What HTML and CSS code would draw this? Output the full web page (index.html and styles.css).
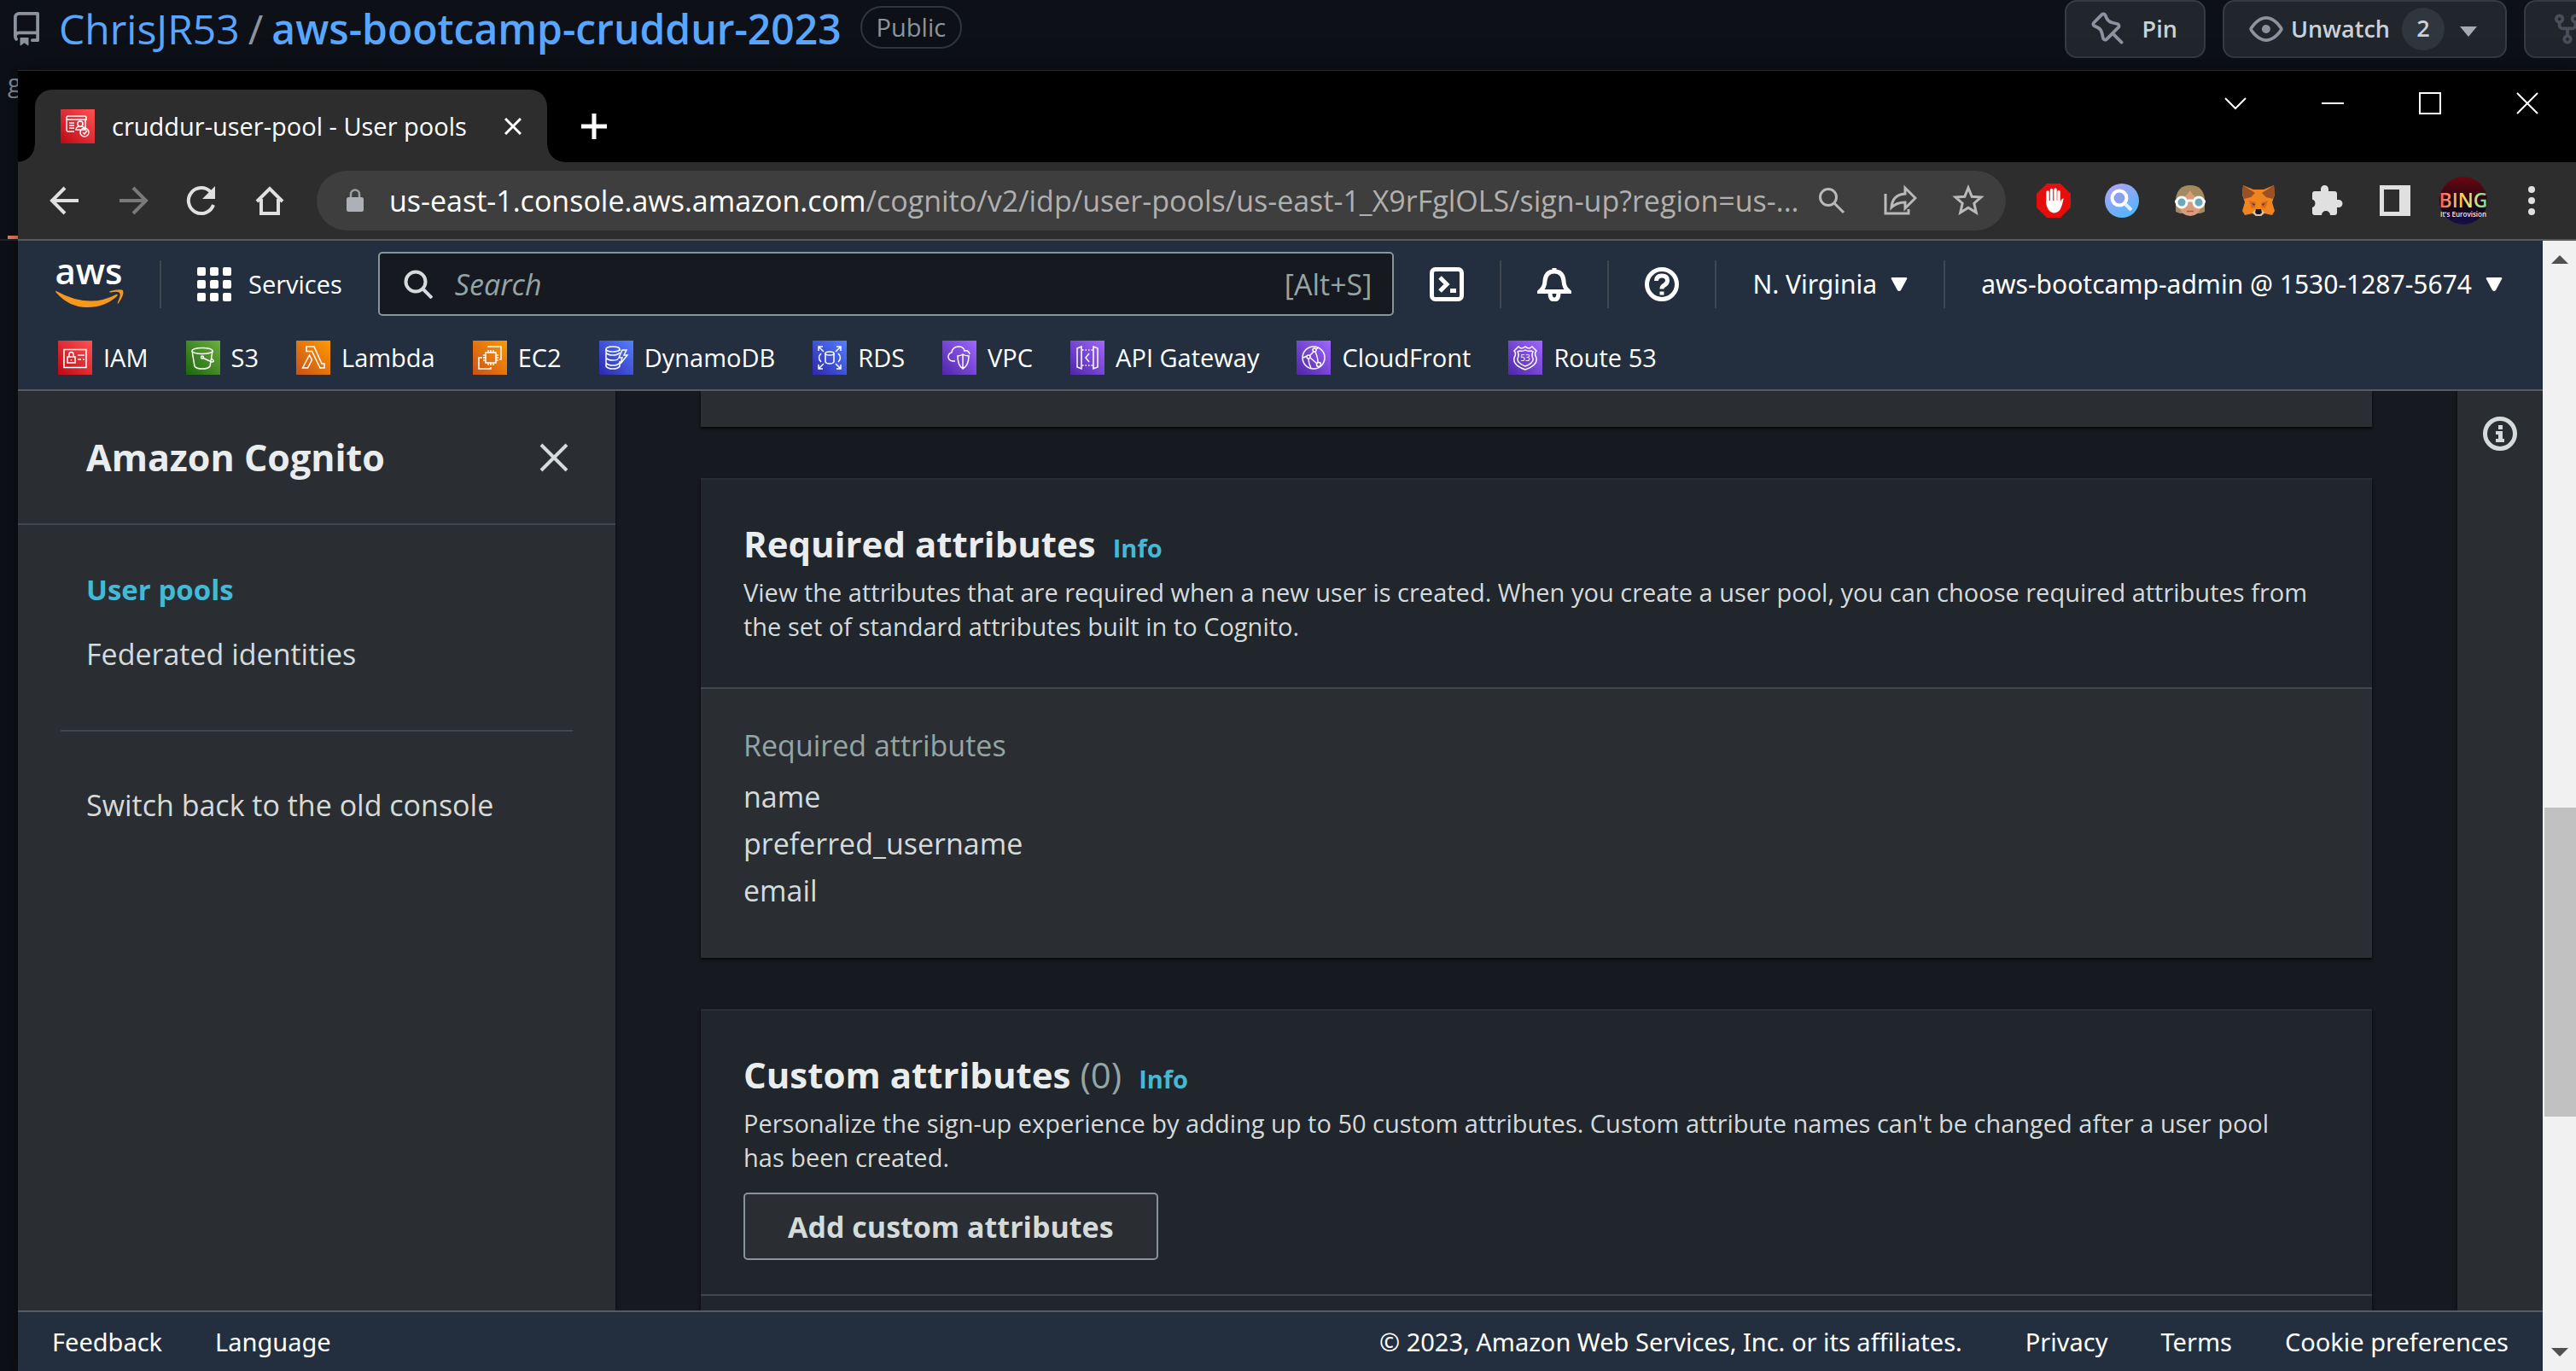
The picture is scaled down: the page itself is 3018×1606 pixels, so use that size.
FILE: index.html
```html
<!DOCTYPE html>
<html lang="en">
<head>
<meta charset="utf-8">
<meta name="viewport" content="width=device-width, initial-scale=1">
<title>cruddur-user-pool - User pools</title>
<link rel="stylesheet" href="styles.css">
</head>
<body>
<div class="desktop">

<section class="repo">
  <header class="repo-header">
    <svg class="icon-40 muted" viewBox="0 0 16 16" aria-hidden="true"><path d="M2 2.5A2.5 2.5 0 0 1 4.5 0h8.75a.75.75 0 0 1 .75.75v12.5a.75.75 0 0 1-.75.75h-2.5a.75.75 0 0 1 0-1.5h1.75v-2h-8a1 1 0 0 0-.714 1.7.75.75 0 1 1-1.072 1.05A2.495 2.495 0 0 1 2 11.5Zm10.5-1h-8a1 1 0 0 0-1 1v6.708A2.486 2.486 0 0 1 4.5 9h8ZM5 12.25a.25.25 0 0 1 .25-.25h3.5a.25.25 0 0 1 .25.25v3.25a.25.25 0 0 1-.4.2l-1.45-1.087a.249.249 0 0 0-.3 0L5.4 15.7a.25.25 0 0 1-.4-.2Z"/></svg>
    <h1 class="repo-name"><a href="#owner">ChrisJR53</a><span class="slash">/</span><a class="strong" href="#repo">aws-bootcamp-cruddur-2023</a></h1>
    <span class="pill">Public</span>
    <div class="repo-actions">
      <button class="gh-btn gh-pin" type="button"><svg class="icon-40" viewBox="0 0 16 16" aria-hidden="true"><path d="M4.456.734a1.75 1.75 0 0 1 2.826.504l.613 1.327a3.081 3.081 0 0 0 2.084 1.707l2.454.584c1.332.317 1.8 1.972.832 2.94L11.06 10l3.72 3.72a.749.749 0 1 1-1.06 1.06L10 11.06l-2.204 2.205c-.968.968-2.623.5-2.94-.832l-.584-2.454a3.081 3.081 0 0 0-1.707-2.084l-1.327-.613a1.75 1.75 0 0 1-.504-2.826L4.456.734ZM5.92 1.866a.25.25 0 0 0-.404-.072L1.794 5.516a.25.25 0 0 0 .072.404l1.328.613A4.582 4.582 0 0 1 5.73 9.63l.584 2.454a.25.25 0 0 0 .42.12l5.47-5.47a.25.25 0 0 0-.12-.42L9.63 5.73a4.581 4.581 0 0 1-3.098-2.537L5.92 1.866Z"/></svg>Pin</button>
      <button class="gh-btn gh-watch" type="button"><svg class="icon-40" viewBox="0 0 16 16" aria-hidden="true"><path d="M8 2c1.981 0 3.671.992 4.933 2.078 1.27 1.091 2.187 2.345 2.637 3.023a1.62 1.62 0 0 1 0 1.798c-.45.678-1.367 1.932-2.637 3.023C11.67 13.008 9.981 14 8 14c-1.981 0-3.671-.992-4.933-2.078C1.797 10.83.88 9.576.43 8.898a1.62 1.62 0 0 1 0-1.798c.45-.677 1.367-1.931 2.637-3.022C4.33 2.992 6.019 2 8 2ZM1.679 7.932a.12.12 0 0 0 0 .136c.411.622 1.241 1.75 2.366 2.717C5.176 11.758 6.527 12.5 8 12.5c1.473 0 2.825-.742 3.955-1.715 1.124-.967 1.954-2.096 2.366-2.717a.12.12 0 0 0 0-.136c-.412-.621-1.242-1.75-2.366-2.717C10.824 4.242 9.473 3.5 8 3.5c-1.473 0-2.825.742-3.955 1.715-1.124.967-1.954 2.096-2.366 2.717ZM8 10a2 2 0 1 1-.001-3.999A2 2 0 0 1 8 10Z"/></svg>Unwatch<span class="counter">2</span><svg class="gh-caret" viewBox="0 0 20 12" aria-hidden="true"><path d="M0 0h20L10 12z"/></svg></button>
      <button class="gh-btn gh-fork" type="button" aria-label="Fork"><svg class="icon-40" viewBox="0 0 16 16" aria-hidden="true"><path d="M5 5.372v.878c0 .414.336.75.75.75h4.5a.75.75 0 0 0 .75-.75v-.878a2.25 2.25 0 1 1 1.5 0v.878a2.25 2.25 0 0 1-2.25 2.25h-1.5v2.128a2.251 2.251 0 1 1-1.5 0V8.5h-1.5A2.25 2.25 0 0 1 3.5 6.25v-.878a2.25 2.25 0 1 1 1.5 0ZM5 3.25a.75.75 0 1 0-1.5 0 .75.75 0 0 0 1.5 0Zm6.75.75a.75.75 0 1 0 0-1.5.75.75 0 0 0 0 1.5Zm-3 8.75a.75.75 0 1 0-1.5 0 .75.75 0 0 0 1.5 0Z"/></svg></button>
    </div>
  </header>
  <p class="repo-note">g</p>
  <div class="repo-tabs"><span class="repo-tab-active"></span></div>
</section>

<section class="window">
  <div class="tabstrip">
    <div class="tab">
      <svg class="fav red" viewBox="0 0 40 40" aria-hidden="true"><path d="M16 26H9q-2 0-2-2V10q0-2 2-2h19q2 0 2 2v3M7 12h12M10 16h6M10 19h6M10 22h6"/><circle cx="23" cy="17" r="3"/><path d="M18 24q0-4 5-4t6 4zM19 12h10v12"/><circle cx="28" cy="27" r="5"/><path d="m26 27 2 2 3-4"/></svg>
      <span class="tab-title">cruddur-user-pool - User pools</span>
      <button class="plain" type="button" aria-label="Close tab"><svg class="tab-x" viewBox="0 0 20 20"><path d="m1 1 18 18M19 1 1 19"/></svg></button>
    </div>
    <button class="plain" type="button" aria-label="New tab"><svg class="tab-plus" viewBox="0 0 30 30"><path d="M15 0v30M0 15h30"/></svg></button>
    <div class="win-controls">
      <button class="plain win-btn" type="button" aria-label="Search tabs"><svg viewBox="0 0 26 26"><path d="m1 7 12 12L25 7"/></svg></button>
      <button class="plain win-btn" type="button" aria-label="Minimize"><svg viewBox="0 0 26 26"><path d="M0 13h26"/></svg></button>
      <button class="plain win-btn" type="button" aria-label="Maximize"><svg viewBox="0 0 26 26"><path d="M1 1h24v24H1z"/></svg></button>
      <button class="plain win-btn" type="button" aria-label="Close"><svg viewBox="0 0 26 26"><path d="m1 1 24 24M25 1 1 25"/></svg></button>
    </div>
  </div>

  <div class="toolbar">
    <div class="tools nav-tools">
      <button class="plain" type="button" aria-label="Back"><svg class="tool" viewBox="0 0 40 40"><path d="M36 20H6M20 5 5 20l15 15"/></svg></button>
      <button class="plain" type="button" aria-label="Forward"><svg class="tool dim" viewBox="0 0 40 40"><path d="M4 20h30M20 5l15 15-15 15"/></svg></button>
      <button class="plain" type="button" aria-label="Reload"><svg class="tool" viewBox="0 0 40 40"><path d="M31 10A15 15 0 1 0 34 25"/><path class="solid" d="M36 3v15H21z"/></svg></button>
      <button class="plain" type="button" aria-label="Home"><svg class="tool" viewBox="0 0 40 40"><path d="M5 21 20 6l15 15M10 18v17h20V18"/></svg></button>
    </div>
    <div class="omnibox">
      <svg class="lock" viewBox="0 0 20 28" aria-hidden="true"><path d="M5 11V6.500a5 5 0 0 1 10 0V11" fill="none" stroke="#9aa0a6" stroke-width="2.500"/><rect y="10" width="20" height="17" rx="2.500" fill="#adb1b6"/></svg>
      <span class="url"><b>us-east-1.console.aws.amazon.com</b>/cognito/v2/idp/user-pools/us-east-1_X9rFglOLS/sign-up?region=us-...</span>
      <div class="tools">
        <button class="plain" type="button" aria-label="Zoom"><svg class="tool grey" viewBox="0 0 40 40"><circle cx="16" cy="16" r="9.500"/><path d="m23 23 11 11"/></svg></button>
        <button class="plain" type="button" aria-label="Share"><svg class="tool grey" viewBox="0 0 40 40"><path d="M3 12v23h27v-5"/><path d="M10 28q1-15 16-16V5l12 12-12 12v-7q-10 0-16 6z"/></svg></button>
        <button class="plain" type="button" aria-label="Bookmark"><svg class="tool grey" viewBox="0 0 40 40"><path d="m20 5 4.200 10.200L35 16l-8.200 7.200L29.300 34 20 28.200 10.700 34l2.500-10.800L5 16l10.800-.8z"/></svg></button>
      </div>
    </div>
    <div class="tools">
      <button class="plain" type="button" aria-label="Ad blocker"><svg class="ext" viewBox="0 0 40 40"><path fill="#e60d0d" d="M12 0h16l12 12v16L28 40H12L0 28V12z"/><g stroke="#fff" stroke-width="3.400" stroke-linecap="round"><path d="M13 10v14M17.500 7.500V24M22 7v17M26 9.500V24"/></g><path fill="#fff" d="M11.300 20h16.400v2q1-4.500 4-4.500-1.500 8-4 13-3 4-8 4-8.400-1.500-8.400-14.500z"/></svg></button>
      <button class="plain" type="button" aria-label="Search extension"><svg class="ext" viewBox="0 0 40 40"><defs><linearGradient id="orb" x1="0" y1="0" x2=".6" y2="1"><stop offset="0" stop-color="#b9a0f5"/><stop offset="1" stop-color="#54b4fb"/></linearGradient></defs><circle cx="20" cy="20" r="20" fill="url(#orb)"/><circle cx="17" cy="17" r="8.500" fill="#8ba0ee" stroke="#fff" stroke-width="4"/><path d="m24 24 7 7" stroke="#e3eefd" stroke-width="4"/></svg></button>
      <button class="plain" type="button" aria-label="Goggles extension"><svg class="ext" viewBox="0 0 40 40"><path fill="#a38a5f" d="M3 33V18Q5 2 20 2t17 16v15l-5 2H8z"/><path fill="#d99b78" d="M7 18q7-1 13-10 3 8 13 10v9q-3 11-13 11T7 27z"/><path d="M17 20h6M2 21h4M34 21h4" stroke="#f5f8f8" stroke-width="3"/><circle cx="10" cy="22" r="6" fill="#6ea6b4" stroke="#f7fafa" stroke-width="3"/><circle cx="30" cy="22" r="6" fill="#6ea6b4" stroke="#f7fafa" stroke-width="3"/><path d="M16 32.500h8" stroke="#a65b49" stroke-width="1.500"/></svg></button>
      <button class="plain" type="button" aria-label="Wallet extension"><svg class="ext" viewBox="0 0 40 40"><path fill="#f08420" d="m2 2 12 5h12l12-5 1 11-3 9 3 10-3 5-9-2-4 3h-6l-4-3-9 2-3-5 3-10-3-9z"/><path fill="#9a5126" d="m2 2 14 9-5 5-8 2-2-6zM38 2l-14 9 5 5 8 2 2-6z"/><path fill="#d96a1c" d="m9 20 8 2-1 6-4 1zM31 20l-8 2 1 6 4 1z"/><path fill="#2b3a4a" d="m12 23 4 1-1 2zM28 23l-4 1 1 2z"/><path fill="#d6c6b8" d="m13 34 3-3h8l3 3-4 4h-6z"/><path fill="#17181a" d="M17 30h6l1 4-2 2h-4l-2-2z"/></svg></button>
      <button class="plain" type="button" aria-label="Extensions"><svg class="ext" viewBox="0 0 40 40"><path fill="#e0e0e0" d="M6 9h7V6.500a4.500 4.500 0 0 1 9 0V9h7a3 3 0 0 1 3 3v7h2a4.500 4.500 0 0 1 0 9h-2v6a3 3 0 0 1-3 3h-5a5 5 0 0 0-10 0H6a3 3 0 0 1-3-3v-6a5 5 0 0 0 0-9.500V12a3 3 0 0 1 3-3z"/></svg></button>
      <button class="plain" type="button" aria-label="Side panel"><svg class="ext" viewBox="0 0 40 40"><path fill="#e0e0e0" fill-rule="evenodd" d="M2 2h36v36H2zM7 7v26h18V7z"/></svg></button>
    </div>
    <svg class="avatar" viewBox="0 0 56 56" role="img" aria-label="Profile"><defs><linearGradient id="night" x2="0" y2="1"><stop offset="0" stop-color="#6b0712"/><stop offset=".6" stop-color="#170510"/><stop offset="1" stop-color="#15104a"/></linearGradient><linearGradient id="neon"><stop offset="0" stop-color="#f2576a"/><stop offset=".4" stop-color="#f6c85a"/><stop offset=".7" stop-color="#d9e87a"/><stop offset="1" stop-color="#5fd6b8"/></linearGradient></defs><circle cx="28" cy="28" r="28" fill="url(#night)"/><text x="28" y="36" text-anchor="middle" font-size="23" font-weight="600" fill="url(#neon)">BING</text><text x="28" y="47" text-anchor="middle" font-size="8" font-weight="600" fill="#f1e6ee">It's Eurovision</text></svg>
    <button class="plain" type="button" aria-label="Menu"><svg class="ext" viewBox="0 0 40 40" fill="#e0e0e0"><circle cx="20" cy="7" r="4"/><circle cx="20" cy="20" r="4"/><circle cx="20" cy="33" r="4"/></svg></button>
  </div>

  <div class="viewport">
    <div class="console">
      <header class="aws-header">
        <div class="aws-row">
          <a href="#home" aria-label="AWS home"><svg class="aws-logo" viewBox="0 0 80 54"><text x="39" y="27" text-anchor="middle" font-size="42" font-weight="600" fill="#fff">aws</text><path fill="#f7981d" d="M1 35q38 21 70 4 3-1 1 2-14 13-35 13T1 37q-2-3 0-2zM64 35q11-3 15-1 2 5-5 15-2 2-1-1 4-9 2-11t-10-.5q-3 0-1-1.500z"/></svg></a>
          <span class="rule"></span>
          <button class="plain services" type="button"><svg class="icon-40" viewBox="0 0 40 40" fill="#fff"><rect width="10" height="10" rx="2"/><rect x="15" width="10" height="10" rx="2"/><rect x="30" width="10" height="10" rx="2"/><rect y="15" width="10" height="10" rx="2"/><rect x="15" y="15" width="10" height="10" rx="2"/><rect x="30" y="15" width="10" height="10" rx="2"/><rect y="30" width="10" height="10" rx="2"/><rect x="15" y="30" width="10" height="10" rx="2"/><rect x="30" y="30" width="10" height="10" rx="2"/></svg>Services</button>
          <label class="search"><svg class="search-icon" viewBox="0 0 34 34" aria-hidden="true"><circle cx="14" cy="14" r="11.500"/><path d="m22 22 11 11"/></svg><input type="search" placeholder="Search" aria-label="Search"><span class="hint">[Alt+S]</span></label>
          <button class="plain" type="button" aria-label="CloudShell"><svg class="line-icon" viewBox="0 0 40 40"><rect x="2.500" y="2.500" width="35" height="35" rx="4"/><path d="m12 12 8 8-8 8"/><path d="M24 27.500h7"/></svg></button>
          <span class="rule"></span>
          <button class="plain" type="button" aria-label="Notifications"><svg class="line-icon" viewBox="0 0 40 40"><path d="M20 1v4M3 28.500h34q-6-5-6-12.500Q30 5 20 5T9 16q0 7.500-6 12.500zM15 30q0 8 5 8t5-8"/></svg></button>
          <span class="rule"></span>
          <button class="plain" type="button" aria-label="Help"><svg class="line-icon" viewBox="0 0 40 40"><circle cx="20" cy="20" r="17.500"/><path d="M13.500 16q0-6 6.500-6t6.500 5.500q0 3.500-3.500 5.500-3 1.500-3 4.500M20 28.500v4"/></svg></button>
          <span class="rule"></span>
          <button class="plain account" type="button">N. Virginia<svg class="caret" viewBox="0 0 20 16"><path d="M2 0h16q2 0 1 2l-7 13q-2 2-4 0L1 2Q0 0 2 0z"/></svg></button>
          <span class="rule"></span>
          <button class="plain account" type="button">aws-bootcamp-admin @ 1530-1287-5674<svg class="caret" viewBox="0 0 20 16"><path d="M2 0h16q2 0 1 2l-7 13q-2 2-4 0L1 2Q0 0 2 0z"/></svg></button>
        </div>
        <nav class="favorites" aria-label="Favorites">
          <a href="#iam"><svg class="fav red" viewBox="0 0 40 40"><path d="M7 10.500h26v21H7zM11 19h9v7h-9zM13 19v-3q0-2.500 2.500-2.500T18 16v3M15.500 22v1.500M23 17h8M23 22h4M29 22h2"/></svg>IAM</a>
          <a href="#s3"><svg class="fav green" viewBox="0 0 40 40"><ellipse cx="19" cy="12" rx="12" ry="3.500"/><path d="m7 12 3 18q2 3 9 3t9-3l3-18M19 20l11 5q4 0 1-3l-1.500-1"/><circle cx="19" cy="19.500" r="1.500"/></svg>S3</a>
          <a href="#lambda"><svg class="fav orange" viewBox="0 0 40 40"><path d="M12 7h9l9 20h3v5h-5L18.500 12.500H12zM7.500 32h6l5-9.500-3-5.500z"/></svg>Lambda</a>
          <a href="#ec2"><svg class="fav orange" viewBox="0 0 40 40"><path d="M15 14h12v12H15zM18 11v3M21 11v3M24 11v3M18 26v3M21 26v3M24 26v3M12 17h3M12 20h3M12 23h3M27 17h3M27 20h3M27 23h3M18 8V7h15v15h-2M11 20H7v13h14v-2"/></svg>EC2</a>
          <a href="#dynamodb"><svg class="fav blue" viewBox="0 0 40 40"><ellipse cx="16" cy="10" rx="8" ry="3"/><path d="M8 10v4q2 3 8 3t8-3M24 10v2M8 15v5q2 3 8 3t6-2M8 21v5q2 3 8 3t8-3v-2M8 27v3q2 3 8 3t8-3v-5M27 11h5l-3 6h4l-8 10 2-7h-4z"/></svg>DynamoDB</a>
          <a href="#rds"><svg class="fav blue" viewBox="0 0 40 40"><path d="m7 7 6 6M7 12V7h5M33 7l-6 6M28 7h5v5M7 33l6-6M7 28v5h5M33 33l-6-6M28 33h5v-5M15 15v10q1 2 5 2t5-2V15M10 15q-5 5 0 10M30 15q5 5 0 10"/><ellipse cx="20" cy="15" rx="5" ry="2"/></svg>RDS</a>
          <a href="#vpc"><svg class="fav purple" viewBox="0 0 40 40"><path d="M15 24h-3q-5-1-5-5t4-5q1-7 8-7 6 0 7 5 5-1 6 4M24 16q-3 2-6 2 0 11 6 15 7-4 7-15-4 0-7-2zM24 16v17"/></svg>VPC</a>
          <a href="#apigateway"><svg class="fav purple" viewBox="0 0 40 40"><path d="m13 7-5 2v22l5 2zM27 7l5 2v22l-5 2zM22 15l-4 5 4 5"/><path stroke-dasharray="1.500 2" d="M14 11h12M14 29h12"/></svg>API Gateway</a>
          <a href="#cloudfront"><svg class="fav purple" viewBox="0 0 40 40"><circle cx="20" cy="20" r="13"/><circle cx="21" cy="11" r="2"/><circle cx="14" cy="19" r="2"/><circle cx="26" cy="28" r="2.500"/><path d="m20 13-5 5M16 20l8 7M22 13q3 7 3 12M12 18l-4 2M23 10l3-2M14 21q0 6 3 11"/></svg>CloudFront</a>
          <a href="#route53"><svg class="fav purple" viewBox="0 0 40 40"><path d="m12 7 3 2q3 0 5-2 2 2 5 2l3-2 5 5q-3 3 0 8 2 9-13 14Q5 29 7 20q3-5 0-8z"/><path d="M13 12q4 1 7-1 3 2 7 1l2 1q-2 4 0 8 1 5-9 9-10-4-9-9 2-4 0-8z"/><text x="20" y="24" text-anchor="middle" font-size="10" fill="#fff" stroke="none">53</text></svg>Route 53</a>
        </nav>
      </header>

      <div class="layout">
        <aside class="sidebar">
          <div class="sidebar-head">
            <h2>Amazon Cognito</h2>
            <button class="plain" type="button" aria-label="Close navigation"><svg class="side-x" viewBox="0 0 34 34"><path d="m2 2 30 30M32 2 2 32"/></svg></button>
          </div>
          <nav class="side-nav">
            <a class="active" href="#user-pools">User pools</a>
            <a href="#federated">Federated identities</a>
            <hr>
            <a href="#old-console">Switch back to the old console</a>
          </nav>
        </aside>

        <main class="content">
          <section class="card card-tail"></section>
          <section class="card">
            <header class="card-head">
              <h2>Required attributes</h2><a class="info" href="#info-required">Info</a>
              <p>View the attributes that are required when a new user is created. When you create a user pool, you can choose required attributes from the set of standard attributes built in to Cognito.</p>
            </header>
            <dl class="card-body">
              <dt>Required attributes</dt>
              <dd>name</dd>
              <dd>preferred_username</dd>
              <dd>email</dd>
            </dl>
          </section>
          <section class="card">
            <header class="card-head with-action">
              <h2>Custom attributes <span class="count">(0)</span></h2><a class="info" href="#info-custom">Info</a>
              <p>Personalize the sign-up experience by adding up to 50 custom attributes. Custom attribute names can't be changed after a user pool has been created.</p>
              <button class="aws-btn" type="button">Add custom attributes</button>
            </header>
            <div class="card-foot"></div>
          </section>
        </main>

        <aside class="rail">
          <button class="plain" type="button" aria-label="Open help panel"><svg class="rail-icon" viewBox="0 0 40 40"><circle cx="20" cy="20" r="17.500" fill="none" stroke="#d5dbdb" stroke-width="5"/><path fill="#d5dbdb" d="M18 10h5v5h-5zM15 17h8v9h2v4H15v-4h3v-5h-3z"/></svg></button>
        </aside>
      </div>

      <footer class="aws-footer">
        <a href="#feedback">Feedback</a>
        <a href="#language">Language</a>
        <span class="copyright">© 2023, Amazon Web Services, Inc. or its affiliates.</span>
        <a href="#privacy">Privacy</a>
        <a href="#terms">Terms</a>
        <a href="#cookies">Cookie preferences</a>
      </footer>
    </div>

    <div class="scrollbar" aria-hidden="true">
      <svg viewBox="0 0 20 10"><path d="M0 10h20L10 0z"/></svg>
      <div class="track"><div class="thumb"></div></div>
      <svg viewBox="0 0 20 10"><path d="M0 0h20L10 10z"/></svg>
    </div>
  </div>
</section>

</div>
</body>
</html>
```
FILE: styles.css
```css
* { box-sizing: border-box; }

body {
  margin: 0;
  background: #0d1117;
  color: #d5dbdb;
  font-family: "Open Sans", "Noto Sans", sans-serif;
  font-size: 29px;
  line-height: 40px;
}

h1, h2, p, dl, dd { margin: 0; }
a { color: inherit; text-decoration: none; }
svg { display: block; flex: none; }
button, input { font: inherit; color: inherit; }
svg text { font-family: "Open Sans", "Noto Sans", sans-serif; }

.plain {
  display: flex;
  align-items: center;
  padding: 0;
  border: 0;
  background: none;
  white-space: nowrap;
}

.icon-40 { width: 40px; height: 40px; }

.desktop {
  position: relative;
  height: 100vh;
  overflow: hidden;
}

/* Repository page behind the browser window */
.repo-header {
  display: flex;
  align-items: center;
  height: 68px;
  padding-left: 11px;
}
.muted { fill: #8b949e; }
.repo-name {
  display: flex;
  margin-left: 18px;
  color: #58a6ff;
  font-size: 48px;
  font-weight: 400;
  line-height: 60px;
  white-space: nowrap;
}
.slash { margin: 0 10px; color: #8b949e; }
.strong { font-weight: 600; }
.pill {
  margin: 0 0 5px 22px;
  padding: 3px 17px;
  border: 2px solid #30363d;
  border-radius: 25px;
  color: #8b949e;
}
.repo-actions { display: flex; gap: 20px; margin-left: auto; }
.gh-btn {
  display: flex;
  align-items: center;
  height: 68px;
  border: 2px solid #363b42;
  border-radius: 14px;
  background: #21262d;
  color: #c9d1d9;
  font-size: 27px;
  font-weight: 600;
}
.gh-btn svg { fill: #8b949e; }
.gh-pin { gap: 20px; padding: 0 31px 0 29px; }
.gh-watch { padding: 0 33px 0 29px; }
.gh-watch .icon-40 { margin-right: 9px; }
.counter {
  width: 50px;
  height: 50px;
  margin: 0 18px 0 14px;
  border-radius: 25px;
  background: #30363d;
  line-height: 48px;
}
.gh-btn .gh-caret { width: 20px; height: 12px; margin-top: 6px; fill: #a4abb3; }
.gh-fork {
  width: 61px;
  padding: 0 0 0 29px;
  border-right: 0;
  border-radius: 14px 0 0 14px;
  overflow: hidden;
}
.gh-btn.gh-fork svg { fill: #484f58; }
.repo-note { margin-top: 9px; padding-left: 9px; color: #8b949e; }
.repo-tabs {
  display: flex;
  height: 165px;
  padding-left: 9px;
  border-bottom: 2px solid #21262d;
}
.repo-tab-active { width: 160px; border-bottom: 4px solid #f78166; }

/* Browser window */
.window {
  position: absolute;
  top: 82px;
  right: 0;
  bottom: 0;
  left: 21px;
  display: flex;
  flex-direction: column;
  background: #000;
  box-shadow: 0 0 24px rgba(0, 0, 0, .5);
}
.tabstrip {
  display: flex;
  align-items: flex-end;
  gap: 40px;
  height: 108px;
  padding-left: 20px;
  border-top: 1px solid #2b2b2b;
}
.tabstrip > .plain { height: 85px; }
.tab {
  position: relative;
  display: flex;
  align-items: center;
  gap: 20px;
  width: 600px;
  height: 85px;
  padding: 0 30px;
  border-radius: 20px 20px 0 0;
  background: #2d2d2d;
  color: #fff;
}
.tab::before, .tab::after {
  content: "";
  position: absolute;
  bottom: 0;
  width: 20px;
  height: 20px;
}
.tab::before { right: 100%; background: radial-gradient(circle at 0 0, #000 19px, #2d2d2d 20px); }
.tab::after { left: 100%; background: radial-gradient(circle at 100% 0, #000 19px, #2d2d2d 20px); }
.tab-title { flex: 1; white-space: nowrap; }
.tab-x { width: 20px; height: 20px; stroke: #fff; stroke-width: 3; }
.tab-plus { width: 30px; height: 30px; stroke: #fff; stroke-width: 5; }
.win-controls { display: flex; align-self: flex-start; margin-left: auto; }
.win-btn { justify-content: center; width: 114px; height: 76px; }
.win-btn svg { width: 26px; height: 26px; fill: none; stroke: #fff; stroke-width: 2; }

.toolbar {
  display: flex;
  align-items: center;
  height: 92px;
  padding: 0 32px 0 35px;
  border-bottom: 2px solid #5a5859;
  background: #2d2d2d;
}
.tools { display: flex; gap: 40px; }
.tool { width: 40px; height: 40px; fill: none; stroke: #e0e0e0; stroke-width: 4; }
.tool .solid { fill: #e0e0e0; stroke: none; }
.tool.dim { stroke: #7a7a7a; }
.tool.grey { stroke: #bababa; stroke-width: 3; }
.omnibox {
  display: flex;
  flex: 1;
  align-items: center;
  min-width: 0;
  height: 70px;
  margin: 0 36px 0 35px;
  padding: 0 24px 0 35px;
  border-radius: 35px;
  background: #3e3e3e;
}
.lock { width: 20px; height: 28px; margin-right: 30px; }
.url {
  flex: 1;
  overflow: hidden;
  color: #b0b0b0;
  font-size: 34px;
  line-height: 50px;
  white-space: nowrap;
}
.url b { color: #fff; font-weight: 400; }
.ext { width: 40px; height: 40px; }
.avatar { width: 56px; height: 56px; margin: 0 32px; }

.viewport { display: flex; flex: 1; min-height: 0; }
.console { display: flex; flex: 1; flex-direction: column; min-width: 0; }

/* Console header */
.aws-header {
  padding: 13px 47px 17px 44px;
  border-bottom: 2px solid #545b64;
  background: #232f3e;
  color: #fff;
}
.aws-row { display: flex; align-items: center; gap: 42px; height: 75px; }
.aws-logo { width: 80px; height: 54px; overflow: visible; }
.rule { width: 2px; height: 56px; background: #414750; }
.services { gap: 20px; }
.search {
  display: flex;
  flex: 1;
  align-items: center;
  min-width: 0;
  height: 75px;
  padding: 0 24px 0 28px;
  border: 2px solid #879596;
  border-radius: 5px;
  background: #16191f;
  color: #95a5a6;
  font-size: 34px;
}
.search-icon { width: 34px; height: 34px; fill: none; stroke: #d5dbdb; stroke-width: 4; }
.search input {
  flex: 1;
  min-width: 0;
  margin-left: 26px;
  padding: 0;
  border: 0;
  background: none;
  outline: 0;
}
.search input::placeholder { color: #95a5a6; font-style: italic; opacity: 1; }
.line-icon { width: 40px; height: 40px; fill: none; stroke: #fff; stroke-width: 5; }
.account { gap: 16px; font-family: "Noto Sans", sans-serif; font-size: 30px; }
.caret { width: 20px; height: 16px; fill: #fff; }

.favorites { display: flex; gap: 44px; margin-top: 29px; padding-left: 3px; }
.favorites a { display: flex; align-items: center; gap: 13px; white-space: nowrap; }
.fav { width: 40px; height: 40px; fill: none; stroke: #fff; stroke-width: 1.5; }
.red { background: linear-gradient(45deg, #bd0816, #ff5252); }
.green { background: linear-gradient(45deg, #1b660f, #6cae3e); }
.orange { background: linear-gradient(45deg, #c8511b, #f90); }
.blue { background: linear-gradient(45deg, #2e27ad, #527fff); }
.purple { background: linear-gradient(45deg, #4d27a8, #a166ff); }

/* Console body */
.layout {
  display: grid;
  flex: 1;
  grid-template-columns: 700px minmax(0, 1fr) 100px;
  min-height: 0;
  overflow: hidden;
  background: #16191f;
}
.sidebar, .rail { background: #2a2e33; box-shadow: 0 0 3px rgba(0, 0, 0, .8); }
.sidebar-head {
  display: flex;
  align-items: center;
  justify-content: space-between;
  height: 157px;
  padding: 0 55px 0 80px;
  border-bottom: 2px solid #414750;
}
h2 { color: #eaeded; font-size: 42px; font-weight: 700; line-height: 56px; }
.sidebar-head h2 { font-size: 43px; }
.side-x { width: 34px; height: 34px; stroke: #d5dbdb; stroke-width: 4; }
.side-nav {
  display: flex;
  flex-direction: column;
  gap: 25px;
  padding: 51px 50px 0;
  font-size: 34px;
  line-height: 50px;
}
.side-nav a { padding-left: 30px; }
.side-nav .active { color: #44b9d6; font-size: 33px; font-weight: 700; }
.side-nav hr {
  width: 100%;
  margin: 39px 0 36px;
  border: 0;
  border-top: 2px solid #414750;
}

.content {
  display: flex;
  flex-direction: column;
  gap: 60px;
  min-height: 0;
  padding: 0 100px;
  overflow: hidden;
}
.card {
  flex: none;
  border-top: 2px solid #2a2e33;
  background: #2a2e33;
  box-shadow: 0 2px 3px rgba(0, 0, 0, .8);
}
.card-tail { height: 42px; }
.card-head {
  display: flex;
  flex-wrap: wrap;
  align-items: baseline;
  column-gap: 20px;
  padding: 47px 50px 51px;
  border-bottom: 2px solid #414750;
  background: #21252c;
}
.card-head.with-action { padding-bottom: 40px; }
.card-head p { flex: 0 0 100%; margin-top: 9px; padding-right: 20px; }
.count { color: #95a5a6; font-weight: 400; }
.info { color: #44b9d6; font-weight: 700; }
.aws-btn {
  height: 79px;
  margin-top: 21px;
  padding: 0 50px;
  border: 2px solid #879596;
  border-radius: 5px;
  background: #2a2e33;
  font-size: 34px;
  font-weight: 700;
}
.card-body { padding: 44px 50px 51px; font-size: 34px; line-height: 55px; }
.card-body dt { margin-bottom: 11px; color: #95a5a6; line-height: 44px; }
.card-foot { height: 60px; background: #21252c; }
.rail { padding: 30px; }
.rail-icon { width: 40px; height: 40px; }

.aws-footer {
  display: flex;
  align-items: center;
  gap: 62px;
  height: 71px;
  padding: 0 40px;
  border-top: 2px solid #545b64;
  background: #232f3e;
  color: #fff;
  font-family: "Noto Sans", sans-serif;
  white-space: nowrap;
}
.copyright { margin: 0 12px 0 auto; }

/* Page scrollbar */
.scrollbar {
  display: flex;
  flex-direction: column;
  align-items: center;
  width: 39px;
  background: #f1f1f1;
}
.scrollbar svg { width: 20px; height: 10px; margin: 17px 0; fill: #505050; }
.track {
  display: flex;
  flex: 1;
  flex-direction: column;
  align-self: stretch;
  padding-left: 2px;
}
.track::before { content: ""; flex: 621; }
.thumb { flex: 363; background: #c1c1c1; }
.track::after { content: ""; flex: 254; }
```
